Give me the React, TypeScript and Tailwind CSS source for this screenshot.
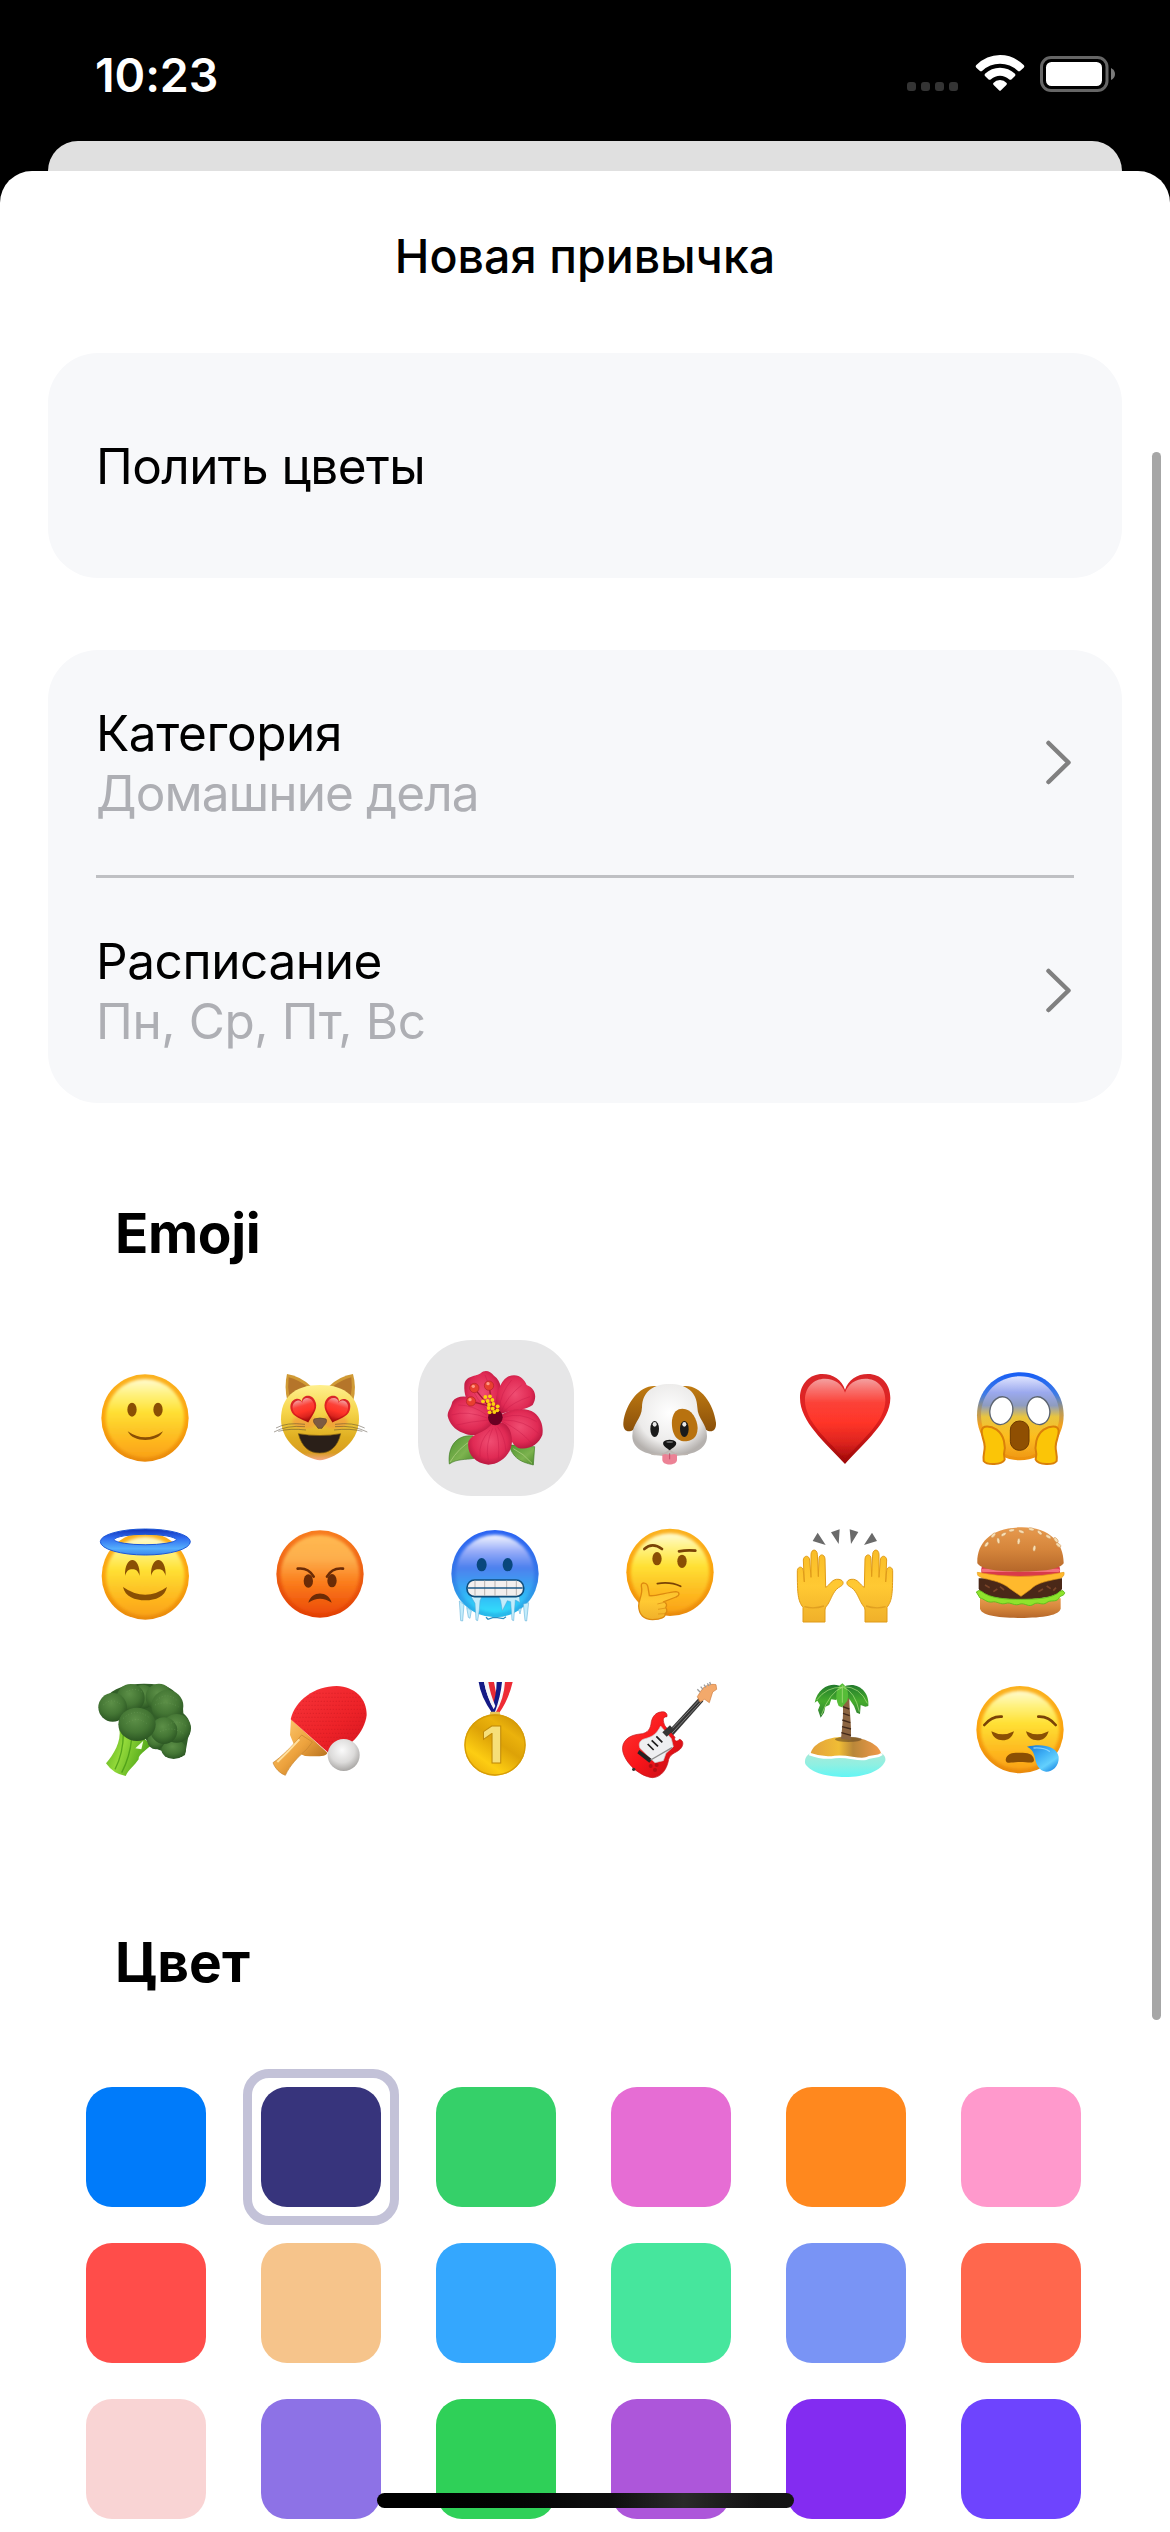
import { ReactNode } from "react";

function Defs() {
  return (
    <svg className="absolute h-0 w-0" aria-hidden="true">
      <defs>
        <linearGradient id="rim" x1="0" y1="0" x2="0" y2="1">
          <stop offset="0" stopColor="#fbb21f" />
          <stop offset="0.5" stopColor="#fba30d" />
          <stop offset="1" stopColor="#e98a0c" />
        </linearGradient>
        <linearGradient id="face" x1="0" y1="0" x2="0" y2="1">
          <stop offset="0" stopColor="#fffbd0" />
          <stop offset="0.2" stopColor="#fff17c" />
          <stop offset="0.42" stopColor="#ffe033" />
          <stop offset="0.62" stopColor="#fdc929" />
          <stop offset="0.82" stopColor="#feb31c" />
          <stop offset="1" stopColor="#f9a217" />
        </linearGradient>
        <linearGradient id="angry" x1="0" y1="0" x2="0" y2="1">
          <stop offset="0" stopColor="#ffb950" />
          <stop offset="0.3" stopColor="#fdae4c" />
          <stop offset="0.6" stopColor="#fb7d1c" />
          <stop offset="1" stopColor="#ec4a06" />
        </linearGradient>
        <linearGradient id="angryRim" x1="0" y1="0" x2="0" y2="1">
          <stop offset="0" stopColor="#f87d1f" />
          <stop offset="1" stopColor="#e23f04" />
        </linearGradient>
        <linearGradient id="cold" x1="0" y1="0" x2="0" y2="1">
          <stop offset="0" stopColor="#f4f6ff" />
          <stop offset="0.22" stopColor="#93a9f8" />
          <stop offset="0.42" stopColor="#4d80ee" />
          <stop offset="0.72" stopColor="#33aef5" />
          <stop offset="1" stopColor="#2fe0fb" />
        </linearGradient>
        <linearGradient id="coldRim" x1="0" y1="0" x2="0" y2="1">
          <stop offset="0" stopColor="#2a63f3" />
          <stop offset="0.5" stopColor="#3577e8" />
          <stop offset="1" stopColor="#27bdea" />
        </linearGradient>
        <linearGradient id="cat" x1="0" y1="0" x2="0" y2="1">
          <stop offset="0" stopColor="#fff08e" />
          <stop offset="0.35" stopColor="#f6d54b" />
          <stop offset="0.7" stopColor="#dfae20" />
          <stop offset="0.9" stopColor="#d99d22" />
          <stop offset="1" stopColor="#f5a888" />
        </linearGradient>
        <linearGradient id="red" x1="0" y1="0" x2="0" y2="1">
          <stop offset="0" stopColor="#f3a0a0" />
          <stop offset="0.14" stopColor="#f8706c" />
          <stop offset="0.3" stopColor="#fc4238" />
          <stop offset="0.55" stopColor="#ff3428" />
          <stop offset="0.8" stopColor="#dc241e" />
          <stop offset="1" stopColor="#a80b0b" />
        </linearGradient>
        <linearGradient id="redRim" x1="0" y1="0" x2="0" y2="1">
          <stop offset="0" stopColor="#d8262a" />
          <stop offset="0.5" stopColor="#e3211f" />
          <stop offset="1" stopColor="#9d0808" />
        </linearGradient>
        <radialGradient id="petal" cx="0.5" cy="0.45" r="0.6">
          <stop offset="0" stopColor="#f04d72" />
          <stop offset="0.65" stopColor="#e02a54" />
          <stop offset="1" stopColor="#b0133b" />
        </radialGradient>
        <linearGradient id="leaf" x1="0" y1="0" x2="1" y2="1">
          <stop offset="0" stopColor="#4f9432" />
          <stop offset="0.6" stopColor="#7db34f" />
          <stop offset="1" stopColor="#4c8a2c" />
        </linearGradient>
        <radialGradient id="dog" cx="0.5" cy="0.4" r="0.6">
          <stop offset="0" stopColor="#ffffff" />
          <stop offset="0.7" stopColor="#ecebea" />
          <stop offset="1" stopColor="#b5b1ae" />
        </radialGradient>
        <linearGradient id="dogEar" x1="0" y1="0" x2="0" y2="1">
          <stop offset="0" stopColor="#c07b12" />
          <stop offset="1" stopColor="#8a500a" />
        </linearGradient>
        <linearGradient id="scream" x1="0" y1="0" x2="0" y2="1">
          <stop offset="0" stopColor="#dfe4ff" />
          <stop offset="0.2" stopColor="#9ba9ee" />
          <stop offset="0.36" stopColor="#8e9cc0" />
          <stop offset="0.5" stopColor="#e9c53e" />
          <stop offset="0.75" stopColor="#fdbd1d" />
          <stop offset="1" stopColor="#f09a18" />
        </linearGradient>
        <linearGradient id="screamRim" x1="0" y1="0" x2="0" y2="1">
          <stop offset="0" stopColor="#165df5" />
          <stop offset="0.25" stopColor="#3f7be6" />
          <stop offset="0.45" stopColor="#b99b5a" />
          <stop offset="0.6" stopColor="#f2a11d" />
          <stop offset="1" stopColor="#ee920c" />
        </linearGradient>
        <linearGradient id="hand" x1="0" y1="0" x2="0" y2="1">
          <stop offset="0" stopColor="#f9bd27" />
          <stop offset="0.5" stopColor="#ffc933" />
          <stop offset="1" stopColor="#f0b02a" />
        </linearGradient>
        <linearGradient id="halo" x1="0" y1="0" x2="0" y2="1">
          <stop offset="0" stopColor="#1131b5" />
          <stop offset="0.35" stopColor="#2f6cf0" />
          <stop offset="0.75" stopColor="#55aefc" />
          <stop offset="1" stopColor="#3a86ee" />
        </linearGradient>
        <linearGradient id="bun" x1="0" y1="0" x2="0" y2="1">
          <stop offset="0" stopColor="#e79a4e" />
          <stop offset="0.5" stopColor="#d5853b" />
          <stop offset="1" stopColor="#b5672a" />
        </linearGradient>
        <radialGradient id="floret" cx="0.45" cy="0.35" r="0.65">
          <stop offset="0" stopColor="#5c8f47" />
          <stop offset="0.6" stopColor="#447634" />
          <stop offset="1" stopColor="#2c5723" />
        </radialGradient>
        <linearGradient id="stem" x1="0" y1="0" x2="1" y2="0.4">
          <stop offset="0" stopColor="#52a818" />
          <stop offset="0.45" stopColor="#93d93a" />
          <stop offset="1" stopColor="#4da417" />
        </linearGradient>
        <linearGradient id="paddle" x1="0" y1="0" x2="1" y2="1">
          <stop offset="0" stopColor="#f7343a" />
          <stop offset="0.6" stopColor="#ed2228" />
          <stop offset="1" stopColor="#d3161f" />
        </linearGradient>
        <radialGradient id="ball" cx="0.45" cy="0.35" r="0.65">
          <stop offset="0" stopColor="#fafafa" />
          <stop offset="0.6" stopColor="#dcdbda" />
          <stop offset="1" stopColor="#a9a7a5" />
        </radialGradient>
        <linearGradient id="wood" x1="0" y1="0" x2="1" y2="1">
          <stop offset="0" stopColor="#fbc56a" />
          <stop offset="0.5" stopColor="#eda33e" />
          <stop offset="1" stopColor="#b8721f" />
        </linearGradient>
        <linearGradient id="gold" x1="0.15" y1="1" x2="0.85" y2="0">
          <stop offset="0" stopColor="#e9a90a" />
          <stop offset="0.25" stopColor="#fdcd12" />
          <stop offset="0.55" stopColor="#dda207" />
          <stop offset="0.75" stopColor="#ebb20c" />
          <stop offset="1" stopColor="#c98f05" />
        </linearGradient>
        <linearGradient id="guitar" x1="0" y1="0" x2="1" y2="1">
          <stop offset="0" stopColor="#ff3a33" />
          <stop offset="0.5" stopColor="#f9151a" />
          <stop offset="1" stopColor="#bd0d14" />
        </linearGradient>
        <linearGradient id="sand" x1="0" y1="0" x2="1" y2="0">
          <stop offset="0" stopColor="#e2a13c" />
          <stop offset="0.4" stopColor="#f0bd35" />
          <stop offset="0.6" stopColor="#b98739" />
          <stop offset="1" stopColor="#f29a4b" />
        </linearGradient>
        <linearGradient id="sea" x1="0" y1="0" x2="0" y2="1">
          <stop offset="0" stopColor="#a9ead9" />
          <stop offset="0.5" stopColor="#8ff0e2" />
          <stop offset="1" stopColor="#62f6f5" />
        </linearGradient>
        <linearGradient id="palm" x1="0" y1="0" x2="0" y2="1">
          <stop offset="0" stopColor="#237a2d" />
          <stop offset="0.5" stopColor="#45ab2c" />
          <stop offset="1" stopColor="#2f7d35" />
        </linearGradient>
        <linearGradient id="drop" x1="0" y1="0" x2="0.8" y2="1">
          <stop offset="0" stopColor="#1a78d4" />
          <stop offset="0.45" stopColor="#3fb0f5" />
          <stop offset="0.75" stopColor="#63d0fd" />
          <stop offset="1" stopColor="#1f8ce6" />
        </linearGradient>
        <filter id="soft" x="-10%" y="-10%" width="120%" height="120%">
          <feGaussianBlur stdDeviation="5" />
        </filter>
        <filter id="soft2" x="-20%" y="-20%" width="140%" height="140%">
          <feGaussianBlur stdDeviation="2" />
        </filter>
      </defs>
    </svg>
  );
}

const BROWN = "#8a4f04";

function Face({ cx, cy, fill = "url(#face)", rim = "url(#rim)" }: { cx: number; cy: number; fill?: string; rim?: string }) {
  return (
    <>
      <circle cx={cx} cy={cy} r="131" fill={rim} />
      <circle cx={cx} cy={cy + 1} r="118" fill={fill} filter="url(#soft)" />
    </>
  );
}

const smile = (
  <>
    <Face cx={255} cy={264} />
    <ellipse cx="216" cy="239" rx="14" ry="21" fill={BROWN} />
    <ellipse cx="294" cy="239" rx="14" ry="21" fill={BROWN} />
    <path d="M203 304Q255 340 309 304C300 322 280 330 256 330S212 322 203 304Z" fill={BROWN} />
  </>
);

const eyeHeart = "M0 40C-14 26-39 12-39-10C-39-28-28-38-15-38C-6-38-1-32 0-25C1-32 8-38 16-38C30-38 39-27 39-10C39 12 14 26 0 40Z";

const cat = (
  <>
    <path d="M681 132Q720 138 752 168L682 212Q672 170 681 132Z" fill="#d09a35" />
    <path d="M686 142Q715 150 740 168L688 200Q682 170 686 142Z" fill="#b5752a" />
    <path d="M879 132Q840 138 808 168L880 212Q890 170 879 132Z" fill="#d09a35" />
    <path d="M874 142Q845 150 820 168L872 200Q878 170 874 142Z" fill="#b5752a" />
    <path d="M780 391C742 388 663 344 663 268C663 205 700 165 780 165S897 205 897 268C897 344 818 388 780 391Z" fill="url(#cat)" />
    <ellipse cx="735" cy="275" rx="38" ry="20" fill="#f58a3c" opacity="0.5" filter="url(#soft)" />
    <ellipse cx="825" cy="275" rx="38" ry="20" fill="#f58a3c" opacity="0.5" filter="url(#soft)" />
    <g transform="translate(733 239) rotate(-17)">
      <path d={eyeHeart} fill="url(#redRim)" />
      <path d={eyeHeart} transform="scale(.84)" fill="url(#red)" />
    </g>
    <g transform="translate(829 239) rotate(17)">
      <path d={eyeHeart} fill="url(#redRim)" />
      <path d={eyeHeart} transform="scale(.84)" fill="url(#red)" />
    </g>
    <path d="M762 267Q780 261 798 267C804 278 792 284 786 295H774C768 284 756 278 762 267Z" fill="#7d5b42" stroke="#5a3f2c" strokeWidth="2" />
    <path d="M715 311Q780 322 842 311C833 350 811 369 779 369S725 350 715 311Z" fill="#2a1f18" stroke="#7c5b12" strokeWidth="2" />
    <g fill="none" stroke="#4a3f30" strokeWidth="1.8" opacity="0.8">
      <path d="M735 283Q680 276 648 294M735 290Q680 285 642 306M738 300Q690 294 655 304" />
      <path d="M825 283Q880 276 914 294M825 290Q880 285 922 306M822 300Q870 294 907 304" />
    </g>
  </>
);

const hibiscus = (
  <>
    <path d="M190 318C140 312 112 350 118 402C140 386 165 390 192 385Z" fill="url(#leaf)" stroke="#3f7a24" strokeWidth="2" />
    <path d="M120 396Q145 355 186 330" stroke="#a9cc7c" strokeWidth="2.5" fill="none" />
    <path d="M298 346C320 342 350 352 374 350L370 405C345 398 310 392 298 346Z" fill="url(#leaf)" stroke="#3f7a24" strokeWidth="2" />
    <path d="M366 400Q340 370 310 356" stroke="#a9cc7c" strokeWidth="2.5" fill="none" />
    <path d="M255 270C195 252 160 220 163 165C166 136 200 140 212 130C224 118 240 122 252 137C276 155 276 180 264 212Z" fill="url(#petal)" />
    <path d="M256 262C250 200 272 150 296 139C325 129 342 146 350 165C377 175 382 202 368 225C340 246 292 235 256 262Z" fill="url(#petal)" />
    <path d="M252 272C236 310 195 326 160 309C133 300 118 280 113 258C113 240 123 235 127 215C142 194 178 196 202 214C228 228 240 248 252 272Z" fill="url(#petal)" />
    <path d="M262 262C300 234 346 230 373 248C394 265 401 290 397 315C385 345 355 361 325 354C298 340 288 290 262 262Z" fill="url(#petal)" />
    <path d="M248 280C282 268 306 290 306 335C303 380 265 404 235 404C193 400 170 370 175 335C190 308 218 314 248 280Z" fill="url(#petal)" />
    <g fill="none" stroke="#c41a47" strokeWidth="2" opacity="0.6">
      <path d="M235 390Q225 345 248 295M210 380Q205 335 240 300M265 385Q270 330 256 295M288 365Q285 320 262 290" />
      <path d="M385 310Q345 270 280 270M365 340Q330 300 280 276M380 275Q330 245 282 262" />
      <path d="M125 255Q170 240 235 265M140 285Q180 275 235 270M145 225Q190 225 230 255" />
      <path d="M305 150Q270 190 268 240M335 165Q290 200 274 245M360 200Q310 215 280 246" />
      <path d="M225 135Q245 180 250 240M180 160Q200 215 240 245" />
    </g>
    <ellipse cx="256" cy="262" rx="22" ry="24" fill="#6b0620" filter="url(#soft2)" />
    <path d="M250 245L193 175M248 240L237 167M245 230L183 214" stroke="#a5182f" strokeWidth="4" />
    <g fill="#e8402f" stroke="#b3202a" strokeWidth="2">
      <circle cx="193" cy="174" r="14" />
      <circle cx="237" cy="167" r="14" />
      <circle cx="183" cy="214" r="14" />
    </g>
    <g fill="#ff9a86">
      <circle cx="190" cy="169" r="5" />
      <circle cx="234" cy="161" r="5" />
      <circle cx="180" cy="209" r="5" />
    </g>
    <g fill="#fbd20e">
      {[[226, 201], [240, 199], [219, 214], [233, 213], [247, 210], [237, 224], [250, 222], [263, 229], [236, 234], [248, 236], [262, 241], [239, 247], [253, 246]].map(([x, y]) => (
        <circle key={`${x}-${y}`} cx={x} cy={y} r="5.8" />
      ))}
    </g>
  </>
);

const dog = (
  <>
    <path d="M742 169C695 160 648 215 640 278C638 304 656 309 670 299C692 284 700 235 742 169Z" fill="url(#dogEar)" />
    <path d="M818 169C865 160 910 215 918 278C920 304 902 309 888 299C866 284 858 235 818 169Z" fill="url(#dogEar)" />
    <path d="M779 162C730 162 697 185 696 232C695 268 667 280 667 318C667 360 712 378 779 378S891 360 891 318C891 280 863 268 862 232C861 185 828 162 779 162Z" fill="url(#dog)" />
    <path d="M817 236C846 236 862 268 863 294C862 325 845 334 820 334C790 330 784 295 786 270C790 245 802 236 817 236Z" fill="#b8720f" />
    <ellipse cx="734" cy="297" rx="13" ry="24" fill="#1b1b1b" />
    <ellipse cx="823" cy="297" rx="13" ry="24" fill="#1b1b1b" />
    <ellipse cx="734" cy="283" rx="6" ry="7" fill="#e8e8e8" />
    <ellipse cx="823" cy="283" rx="6" ry="7" fill="#e8e8e8" />
    <path d="M757 369Q779 380 801 369V390C800 408 758 408 757 390Z" fill="#ec8295" />
    <path d="M779 370V388" stroke="#c25069" strokeWidth="3" />
    <path d="M724 372Q765 378 779 360Q793 378 834 372" fill="none" stroke="#bdb6b1" strokeWidth="4" />
    <path d="M760 336C768 327 790 327 798 336C802 348 787 354 779 361C771 354 756 348 760 336Z" fill="#151515" />
    <ellipse cx="779" cy="336" rx="10" ry="3" fill="#666" />
  </>
);

const heartPath = "M255 402C196 338 120 275 120 204C120 160 150 132 187 132C220 132 246 150 255 179C265 150 290 132 324 132C362 132 391 160 391 204C391 275 312 338 255 402Z";

const heart = (
  <>
    <path d={heartPath} fill="url(#redRim)" />
    <path d={heartPath} transform="translate(255.5 262) scale(.89) translate(-255.5 -262)" fill="url(#red)" filter="url(#soft2)" />
  </>
);

const screamHand = "M665 302C667 284 692 287 710 299C733 316 738 348 732 372L734 389C726 406 680 406 671 393C668 375 675 365 674 350C674 330 664 322 665 302Z";

const scream = (
  <>
    <path d="M780 127C854 127 911 182 911 256C911 326 856 391 780 391S651 326 651 256C651 182 706 127 780 127Z" fill="url(#screamRim)" />
    <path d="M780 139C845 139 898 188 898 256C898 320 846 382 780 382S663 320 663 256C663 188 715 139 780 139Z" fill="url(#scream)" filter="url(#soft2)" />
    <ellipse cx="724" cy="242" rx="34" ry="42" transform="rotate(14 724 242)" fill="#fff" stroke="#5c6470" strokeWidth="4" />
    <ellipse cx="835" cy="242" rx="34" ry="42" transform="rotate(-14 835 242)" fill="#fff" stroke="#5c6470" strokeWidth="4" />
    <rect x="751" y="273" width="56" height="88" rx="27" fill="#8f4f02" stroke="#6e3a00" strokeWidth="3" />
    <path d={screamHand} fill="#fbc507" stroke="#da8009" strokeWidth="6" />
    <path d={screamHand} transform="translate(1561 0) scale(-1 1)" fill="#fbc507" stroke="#da8009" strokeWidth="6" />
  </>
);

const angel = (
  <>
    <Face cx={256} cy={738} />
    <path d="M195 738C193 674 241 674 239 738C234 722 228 718 217 718S200 722 195 738Z" fill={BROWN} />
    <path d="M273 738C271 674 319 674 317 738C312 722 306 718 295 718S278 722 273 738Z" fill={BROWN} />
    <path d="M189 771Q256 818 321 771C315 800 287 811 256 811S195 800 189 771Z" fill={BROWN} />
    <path d="M121 635A135 38 0 0 1 391 635A135 40 0 0 1 121 635ZM162 629A94 17 0 0 0 349 629A94 18 0 0 0 162 629Z" fillRule="evenodd" fill="url(#halo)" stroke="#1b56d8" strokeWidth="3" />
  </>
);

const angry = (
  <>
    <Face cx={780} cy={732} fill="url(#angry)" rim="url(#angryRim)" />
    <ellipse cx="745" cy="753" rx="14" ry="20" fill="#6b2b06" />
    <ellipse cx="816" cy="752" rx="14" ry="20" fill="#6b2b06" />
    <path d="M713 716Q745 712 761 740M849 716Q817 712 801 740" fill="none" stroke="#6b2b06" strokeWidth="8" strokeLinecap="round" />
    <path d="M745 818C755 781 805 781 815 818Q780 795 745 818Z" fill="#6b2b06" />
  </>
);

const cold = (
  <>
    <Face cx={255} cy={731} fill="url(#cold)" rim="url(#coldRim)" />
    <ellipse cx="215" cy="704" rx="15" ry="20" fill="#08477d" />
    <ellipse cx="293" cy="704" rx="15" ry="20" fill="#08477d" />
    <g fill="#c3ecfb" stroke="#4fa6d4" strokeWidth="1.5">
      <path d="M183 799H216L210 812L208 840L203 872L198 870L195 820L188 808Z" />
      <path d="M266 799H328L330 818L326 815L316 810L311 872L306 870L302 815L292 812L277 842L272 812Z" />
      <path d="M148 813L162 824L158 873L152 872Z" />
      <path d="M170 832L184 842L180 865L175 862Z" />
      <path d="M340 822L356 818L350 873L345 872Z" />
      <path d="M326 838L334 834L330 852Z" />
    </g>
    <path d="M228 862L234 868L248 863L262 863L280 866L288 860" fill="none" stroke="#2b8fc0" strokeWidth="4" />
    <rect x="171" y="750" width="170" height="50" rx="23" fill="#f2efee" stroke="#0f4e7c" strokeWidth="5" />
    <path d="M195 752V798M224 752V798M255 752V798M290 752V798M319 752V798" stroke="#b7b2b0" strokeWidth="3" />
    <path d="M174 774H338" stroke="#1b5a88" strokeWidth="4" />
  </>
);

const thinking = (
  <>
    <Face cx={780} cy={727} />
    <ellipse cx="741" cy="686" rx="14" ry="20" fill={BROWN} />
    <ellipse cx="816" cy="694" rx="14" ry="20" fill={BROWN} />
    <path d="M703 657Q727 635 756 657" fill="none" stroke="#7a4306" strokeWidth="8" strokeLinecap="round" />
    <path d="M807 664Q832 659 856 662" fill="none" stroke="#7a4306" strokeWidth="8" strokeLinecap="round" />
    <path d="M742 761Q780 754 812 769" fill="none" stroke="#7a4306" strokeWidth="5" strokeLinecap="round" />
    <path d="M694 768C692 755 712 756 714 772L718 797C735 800 770 787 798 785C811 787 809 797 798 801L762 815C770 820 772 826 767 833C773 840 771 847 765 851C768 862 752 868 728 869C700 868 687 855 686 828C686 805 700 795 694 768Z" fill="url(#hand)" stroke="#dd8a10" strokeWidth="4" />
    <path d="M742 822L768 816M744 838L768 834M744 852L765 851" stroke="#e39a1c" strokeWidth="3" />
  </>
);

const raisedHand = "M129 876V832C114 812 112 795 112 722C113 708 129 708 130 722L133 756L130 690C131 675 148 675 149 690L153 742V673C154 656 171 656 172 673L175 740L177 685C178 671 194 671 195 687L197 772C210 766 215 745 237 748C253 751 252 764 242 769C222 779 216 800 208 815C202 828 195 830 195 840V876Z";

const hands = (
  <>
    <path d="M173 608L158 633L197 645ZM213 607L239 598L236 642ZM269 598L295 606L273 642ZM336 608L351 633L312 645Z" fill="#6a6a6a" />
    <g fill="url(#hand)" stroke="#e09b18" strokeWidth="3">
      <path d={raisedHand} />
      <path d={raisedHand} transform="translate(510 0) scale(-1 1)" />
    </g>
    <path d="M133 830Q162 838 192 828M377 830Q348 838 318 828" fill="none" stroke="#e0a021" strokeWidth="4" />
  </>
);

const burger = (
  <>
    <path d="M660 805H902V835C900 856 850 864 780 864S662 856 660 835Z" fill="url(#bun)" />
    <path d="M656 745H906V775C902 798 850 808 780 808S660 798 656 775Z" fill="#4a2818" />
    <path d="M675 765l14 8M700 785l12-8M720 770l12 10M835 785l14-8M860 768l12 8M880 782l8-9" stroke="#7a4429" strokeWidth="5" />
    <path d="M649 786Q656 778 664 784C690 806 740 808 782 808S880 806 900 784Q910 778 914 788C914 798 900 795 896 806C886 818 872 808 860 818C846 828 836 814 822 822C806 834 796 818 780 822C764 830 752 815 738 820C722 826 710 812 696 816C680 818 672 806 660 804Z" fill="#8fe32c" stroke="#62bd1e" strokeWidth="3" />
    <rect x="664" y="706" width="236" height="38" rx="12" fill="#d93a4a" />
    <rect x="664" y="716" width="236" height="10" rx="5" fill="#f3707c" />
    <path d="M652 727Q780 752 912 727C914 740 905 745 885 748C850 756 830 760 812 778L783 799L750 776C725 756 700 752 672 745C655 740 652 738 652 727Z" fill="#ffb92d" stroke="#e69a17" strokeWidth="2" />
    <path d="M652 700C650 640 690 594 780 592S912 640 911 700C900 718 850 725 780 725S664 718 652 700Z" fill="url(#bun)" />
    <g fill="#f8dfb4" stroke="#c98a4c" strokeWidth="1.5">
      {[[680, 643, 35], [700, 616, 45], [715, 632, -10], [731, 613, 60], [755, 601, 80], [776, 634, 5], [784, 605, -70], [814, 598, -80], [823, 655, 10], [839, 608, -50], [865, 620, -60], [888, 630, -40], [895, 645, -50]].map(([x, y, r]) => (
        <ellipse key={`${x}-${y}`} cx={x} cy={y} rx="4.5" ry="9" transform={`rotate(${r} ${x} ${y})`} />
      ))}
    </g>
  </>
);

const broccoli = (
  <>
    <path d="M178 1195C185 1235 160 1275 138 1300Q160 1332 197 1338C205 1320 225 1305 236 1288C234 1275 255 1262 275 1245L240 1215Z" fill="url(#stem)" />
    <path d="M190 1210Q190 1270 165 1318M215 1225Q210 1280 185 1328" stroke="#3f9210" strokeWidth="4" fill="none" opacity="0.7" />
    <path d="M226 1255L250 1232L244 1258Z" fill="#f4ffe6" />
    <path d="M135 1105C165 1065 230 1055 300 1065C350 1070 372 1120 370 1150C395 1170 395 1200 384 1225L375 1275C350 1290 315 1285 305 1262C280 1255 260 1240 255 1220L190 1210L175 1165L140 1160Z" fill="#325f28" />
    <g fill="url(#floret)">
      <ellipse cx="341" cy="1258" rx="37" ry="29" />
      <circle cx="288" cy="1232" r="26" />
      <circle cx="248" cy="1100" r="36" />
      <circle cx="297" cy="1101" r="40" />
      <circle cx="212" cy="1104" r="42" />
      <circle cx="158" cy="1132" r="43" />
      <circle cx="322" cy="1128" r="48" />
      <circle cx="350" cy="1195" r="43" />
      <circle cx="312" cy="1202" r="40" />
      <ellipse cx="231" cy="1183" rx="56" ry="50" />
    </g>
    <g fill="none" stroke="#77a562" strokeWidth="3" strokeDasharray="2 7" opacity="0.6">
      <path d="M190 1165Q230 1130 270 1165M200 1180Q235 1155 265 1185M290 1110Q320 1085 350 1110M285 1125Q320 1110 355 1130M130 1125Q155 1100 185 1125M200 1085Q230 1070 250 1090M325 1185Q350 1165 380 1190M300 1205Q340 1185 375 1215" />
    </g>
  </>
);

const pingPong = (
  <>
    <path d="M693 1168L802 1268C800 1280 770 1280 735 1278L712 1268L690 1215Z" fill="url(#wood)" />
    <path d="M725 1215L757 1236L740 1258C715 1280 690 1305 676 1336C660 1330 645 1315 639 1298C665 1280 695 1250 725 1215Z" fill="url(#wood)" stroke="#c58330" strokeWidth="2" />
    <path d="M718 1228Q685 1265 652 1296" stroke="#ffdf9e" strokeWidth="6" fill="none" />
    <path d="M692 1168C705 1110 765 1068 830 1068C885 1070 920 1105 920 1155C915 1205 865 1265 805 1268Z" fill="url(#paddle)" />
    <g stroke="#b9141d" strokeWidth="2" strokeDasharray="4 5" opacity="0.55">
      <path d="M760 1090H890M742 1102H903M728 1114H910M718 1126H914M710 1138H916M704 1150H916M700 1162H914M706 1174H912M718 1186H908M732 1198H902M744 1210H894M757 1222H884M770 1234H872M783 1246H856" />
    </g>
    <circle cx="851" cy="1275" r="48" fill="url(#ball)" />
  </>
);

const medal = (
  <>
    <path d="M232 1056H308Q295 1105 266 1150H248Q280 1095 282 1056Z" fill="#f4f4f6" />
    <path d="M285 1056H308Q296 1108 268 1148L258 1146Q282 1105 285 1056Z" fill="#ee2b35" />
    <path d="M232 1056H252L262 1110L252 1130Q238 1090 232 1056Z" fill="#e72a34" />
    <path d="M260 1056H276Q272 1100 254 1148H242Q260 1095 260 1056Z" fill="#141a86" />
    <path d="M206 1056H222Q232 1105 254 1140L246 1148Q212 1100 206 1056Z" fill="#141a86" />
    <path d="M222 1056H235Q240 1090 256 1128L251 1138Q230 1100 222 1056Z" fill="#f4f4f6" />
    <rect x="240" y="1145" width="30" height="14" rx="4" fill="#e9c65a" />
    <circle cx="255" cy="1245" r="92" fill="url(#gold)" />
    <circle cx="255" cy="1245" r="90" fill="none" stroke="#d69c08" strokeWidth="4" />
    <text x="247" y="1300" textAnchor="middle" fontFamily="Inter, sans-serif" fontWeight="800" fontSize="152" fill="#f6df79" stroke="#c08a08" strokeWidth="3">
      1
    </text>
  </>
);

const guitar = (
  <>
    <path d="M770 1208L866 1104L880 1114L784 1222Z" fill="#343434" />
    <path d="M775 1208L870 1108M781 1215L876 1112" stroke="#a9a9a9" strokeWidth="2" />
    <path d="M862 1100L876 1078C890 1062 908 1062 918 1064L920 1078L908 1086L898 1118L884 1108L870 1116Z" fill="#f3a96b" stroke="#cf7c3d" strokeWidth="2" />
    <path d="M862 1078l8 8M872 1070l7 8M882 1064l6 8M892 1060l5 8M899 1056l3 8" stroke="#9b9b9b" strokeWidth="4" />
    <path d="M752 1146C765 1143 773 1150 771 1160C757 1160 758 1172 765 1188L795 1222C790 1232 802 1238 808 1228C818 1230 822 1240 815 1252C805 1268 782 1268 776 1288C772 1315 755 1342 728 1343C690 1340 645 1300 638 1262C634 1235 655 1215 690 1212C715 1210 722 1195 724 1175C728 1158 738 1148 752 1146Z" fill="url(#guitar)" stroke="#c2141a" strokeWidth="2" />
    <path d="M752 1188L784 1226L790 1250L768 1270L760 1292L735 1298L690 1255C684 1240 690 1230 705 1226C730 1220 740 1210 752 1188Z" fill="#eeeff1" stroke="#c7c9cc" strokeWidth="2" />
    <path d="M757 1207L780 1186L792 1200L770 1220Z" fill="#343434" />
    <path d="M739 1219L757 1237M725 1231L744 1249M713 1242L731 1260" stroke="#1d1d1d" strokeWidth="5" />
    <path d="M688 1260L726 1288L718 1298L682 1270Z" fill="#242424" />
    <path d="M722 1290L786 1253" stroke="#8d8d8d" strokeWidth="4" />
    <circle cx="722" cy="1308" r="6" fill="#b50f14" />
    <circle cx="740" cy="1305" r="6" fill="#b50f14" />
    <circle cx="735" cy="1320" r="6" fill="#b50f14" />
    <circle cx="671" cy="1318" r="5" fill="#333" />
  </>
);

const island = (
  <>
    <path d="M153 1268C138 1275 132 1290 136 1302C155 1330 205 1341 255 1341C315 1341 365 1322 376 1292C378 1280 370 1272 362 1268Z" fill="url(#sea)" />
    <path d="M152 1272C155 1245 195 1220 255 1220C315 1220 360 1245 364 1272C350 1285 335 1278 318 1288C285 1290 270 1275 225 1282C190 1285 170 1275 152 1272Z" fill="url(#sand)" />
    <path d="M148 1272C175 1282 205 1284 225 1281C265 1276 290 1292 318 1286C335 1276 350 1284 366 1272" fill="none" stroke="#fff" strokeWidth="8" />
    <ellipse cx="265" cy="1228" rx="40" ry="8" fill="#5d4220" opacity="0.55" />
    <path d="M247 1100C252 1150 247 1190 243 1226L272 1230C276 1190 268 1150 268 1100Z" fill="#8b6441" />
    <path d="M248 1130L268 1137M249 1150L269 1157M247 1170L271 1178M246 1190L273 1197M244 1208L273 1216" stroke="#43291a" strokeWidth="4" />
    <path d="M247 1072C225 1055 175 1065 164 1118L172 1112L180 1125L174 1140L182 1163L192 1148L196 1130L208 1125L214 1108L228 1110L250 1090L270 1110L282 1128L290 1148L300 1152L302 1125L316 1130L325 1128C330 1085 290 1050 247 1072Z" fill="url(#palm)" />
    <path d="M247 1060C225 1075 225 1105 236 1128L246 1132L262 1112C268 1090 262 1072 247 1060Z" fill="#56bd38" />
    <path d="M247 1072Q210 1085 184 1155M247 1072Q200 1070 170 1110M250 1072Q285 1085 298 1145M250 1070Q300 1070 322 1120M247 1066V1118" stroke="#b4e485" strokeWidth="2" fill="none" />
  </>
);

const sleepy = (
  <>
    <Face cx={780} cy={1199} />
    <path d="M673 1185Q695 1158 725 1160M887 1185Q865 1158 835 1160" fill="none" stroke="#7a4306" strokeWidth="8" strokeLinecap="round" />
    <path d="M694 1204Q728 1222 762 1204C756 1224 744 1231 728 1231S698 1222 694 1204Z" fill={BROWN} />
    <path d="M798 1204Q832 1222 866 1204C860 1224 848 1231 832 1231S802 1222 798 1204Z" fill={BROWN} />
    <path d="M737 1290C740 1268 760 1268 780 1268C802 1268 820 1270 822 1290C822 1302 805 1296 780 1296S738 1304 737 1290Z" fill={BROWN} />
    <path d="M801 1250C840 1240 890 1245 896 1280C898 1310 875 1326 858 1325C835 1322 828 1300 824 1280C820 1262 812 1256 801 1250Z" fill="url(#drop)" />
    <path d="M822 1254Q852 1252 868 1264" fill="none" stroke="#9adcff" strokeWidth="4" strokeLinecap="round" opacity="0.8" />
  </>
);

const EMOJI: { name: string; art: ReactNode }[] = [
  { name: "smile", art: smile },
  { name: "cat", art: cat },
  { name: "hibiscus", art: hibiscus },
  { name: "dog", art: dog },
  { name: "heart", art: heart },
  { name: "scream", art: scream },
  { name: "angel", art: angel },
  { name: "angry", art: angry },
  { name: "cold", art: cold },
  { name: "thinking", art: thinking },
  { name: "hands", art: hands },
  { name: "burger", art: burger },
  { name: "broccoli", art: broccoli },
  { name: "ping-pong", art: pingPong },
  { name: "medal", art: medal },
  { name: "guitar", art: guitar },
  { name: "island", art: island },
  { name: "sleepy", art: sleepy },
];

const COLORS = [
  "bg-[#007bfa]",
  "bg-[#37347c]",
  "bg-[#35d069]",
  "bg-[#e66dd4]",
  "bg-[#ff881e]",
  "bg-[#ff99cc]",
  "bg-[#ff4d4a]",
  "bg-[#f6c48b]",
  "bg-[#34a7fe]",
  "bg-[#46e69d]",
  "bg-[#7994f5]",
  "bg-[#ff674d]",
  "bg-[#f9d4d4]",
  "bg-[#8d72e6]",
  "bg-[#2fd058]",
  "bg-[#ad56da]",
  "bg-[#832cf1]",
  "bg-[#6e44fe]",
];

function StatusBar() {
  return (
    <div className="flex h-[141px] items-start justify-between pr-[54px] pl-[95px]">
      <span className="mt-[45px] text-[46.5px] leading-[60px] font-semibold tracking-[-0.1px] text-white">10:23</span>
      <div className="mt-[55px] flex h-[37px]">
        <div className="mt-[27px] flex gap-[5px]">
          {[0, 1, 2, 3].map((i) => (
            <span key={i} className="h-[9px] w-[9px] rounded-[3px] bg-[#343434]" />
          ))}
        </div>
        <svg className="ml-[17px] h-[37px] w-[50px]" viewBox="0 0 150 111" fill="#fff">
          <path d="M4 30Q0 34 4 38L14 47Q18 50 22 47Q44 26 75 26T128 47Q132 50 136 47L146 38Q150 34 146 30Q115 0 75 0T4 30Z" />
          <path d="M30 56Q27 60 30 63L40 73Q44 76 48 73Q60 62 75 62T102 73Q106 76 110 73L120 63Q123 60 120 56Q101 38 75 38T30 56Z" />
          <path d="M55 84Q53 87 56 90L72 106Q75 109 78 106L94 90Q97 87 95 84Q87 75 75 75T55 84Z" />
        </svg>
        <svg className="ml-[15px] h-[37px] w-[76px]" viewBox="0 0 76 37">
          <rect x="1.5" y="2.5" width="65.5" height="33" rx="9.5" fill="none" stroke="#666" strokeWidth="3" />
          <rect x="6" y="7" width="56" height="24" rx="5.5" fill="#fff" />
          <path d="M71 13Q75 15 75 19T71 25Z" fill="#7a7a7a" />
        </svg>
      </div>
    </div>
  );
}

function SettingRow({ title, value, valueTracking }: { title: string; value: string; valueTracking: string }) {
  return (
    <div className="flex h-[225px] items-center justify-between pr-[1px]">
      <div className="text-[49.5px] leading-[60px]">
        <div className="tracking-[-0.4px] text-black">{title}</div>
        <div className={`text-[#aeafb4] ${valueTracking}`}>{value}</div>
      </div>
      <svg className="h-[45px] w-[28px]" viewBox="0 0 28 45" fill="none" stroke="#808080" strokeWidth="4.5" strokeLinecap="round" strokeLinejoin="round">
        <path d="M3.5 3L23.5 22.5L3.5 42" />
      </svg>
    </div>
  );
}

export default function App() {
  return (
    <div className="relative h-[2532px] w-[1170px] overflow-hidden bg-black font-['Inter','Liberation_Sans',sans-serif] text-black">
      <Defs />
      <StatusBar />
      <div className="mx-[48px] h-[30px] rounded-t-[30px] bg-[#e0e0e0]" />
      <main className="h-[2361px] rounded-t-[32px] bg-white">
        <h1 className="h-[170px] pt-[55px] text-center text-[46.5px] leading-[60px] font-medium tracking-[0.05px]">Новая привычка</h1>

        <div className="mx-[48px] mt-[12px] flex h-[225px] items-center rounded-[50px] bg-[#f7f8fa] pl-[48px] text-[49.5px] leading-[60px] tracking-[-0.6px]">
          Полить цветы
        </div>

        <div className="mx-[48px] mt-[72px] rounded-[50px] bg-[#f7f8fa] px-[48px]">
          <SettingRow title="Категория" value="Домашние дела" valueTracking="tracking-[-0.9px]" />
          <div className="h-[3px] bg-[#bfc0c3]" />
          <SettingRow title="Расписание" value="Пн, Ср, Пт, Вс" valueTracking="tracking-[-0.4px]" />
        </div>

        <h2 className="mt-[95px] pl-[115px] text-[55px] leading-[70px] font-bold tracking-[-0.4px]">Emoji</h2>
        <div className="mt-[72px] ml-[68px] grid w-[1031px] grid-cols-6 gap-x-[19px]">
          {EMOJI.map((e, i) => (
            <div
              key={e.name}
              className={`flex h-[156px] w-[156px] items-center justify-center rounded-[54px] ${i === 2 ? "bg-[#e6e6e7]" : ""}`}
            >
              <svg
                className="h-[96px] w-[96px] overflow-visible"
                viewBox={`${i % 2 === 0 ? 114 : 639} ${120 + 468 * Math.floor(i / 6)} 288 288`}
              >
                {e.art}
              </svg>
            </div>
          ))}
        </div>

        <h2 className="mt-[119px] pl-[115px] text-[55px] leading-[70px] font-bold tracking-[0.1px]">Цвет</h2>
        <div className="mt-[72px] ml-[68px] grid w-[1031px] grid-cols-6 gap-x-[19px]">
          {COLORS.map((c, i) => (
            <div
              key={c}
              className={`flex h-[156px] w-[156px] items-center justify-center rounded-[26px] ${i === 1 ? "border-[9px] border-[#c3c2d8]" : ""}`}
            >
              <div className={`h-[120px] w-[120px] rounded-[26px] ${c}`} />
            </div>
          ))}
        </div>
      </main>
      <div className="absolute top-[452px] left-[1152px] h-[1568px] w-[9px] rounded-full bg-[#a6a6a6]" />
      <div className="absolute top-[2493px] left-[377px] h-[15px] w-[417px] rounded-full bg-linear-to-r from-black via-[#0c0c0c] to-[#141414]">
        <div className="ml-[232px] h-full w-[150px] bg-linear-to-r from-transparent via-[#2a2a2a] to-transparent" />
      </div>
    </div>
  );
}
